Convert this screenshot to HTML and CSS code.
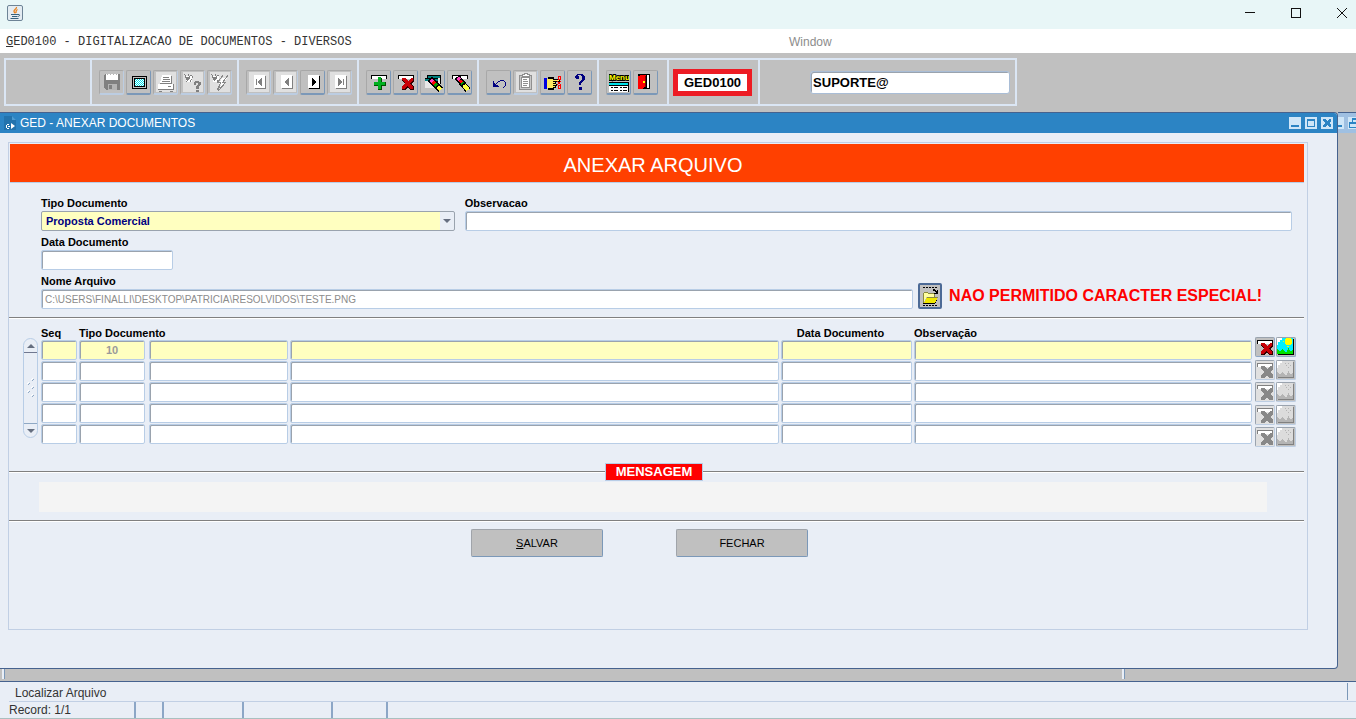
FILE: index.html
```
<!DOCTYPE html>
<html lang="pt-BR">
<head>
    <meta charset="utf-8">
    <title>GED0100 - Digitalizacao de Documentos</title>
    <link rel="stylesheet" href="styles.css">
</head>
<body>
    <!-- Icon set -->
    <svg class="icon-defs" aria-hidden="true">
        <symbol id="i-save" viewBox="0 0 20 20">
            <path fill="#808080" d="M2 3h1V2h15v16H4v-1H3v-1H2z"/>
            <path fill="#fff" d="M4 2h12v6H4z"/>
            <path fill="#b4b4b4" d="M5 2h1v1H5zM8 2h1v1H8zM11 2h1v1h-1zM14 2h1v1h-1zM6 12h9v6H6z"/>
            <path fill="#808080" d="M7 13h3v4H7z"/>
        </symbol>
        <symbol id="i-screen" viewBox="0 0 20 20">
            <path fill="#000" d="M3 4h15v13H3z"/>
            <path fill="#c0c0c0" d="M4 5h13v11H4z"/>
            <path fill="#000" d="M5 6h11v9H5z"/>
            <path fill="#fff" d="M6 7h9v7H6z"/>
            <path fill="none" stroke="#00e0e8" stroke-dasharray="1 1" d="M6 7.500h9M7 8.500h8M6 9.500h9M7 10.500h8M6 11.500h9M7 12.500h8M6 13.500h9"/>
        </symbol>
        <symbol id="i-print" viewBox="0 0 20 20">
            <path fill="#e0e0e0" d="M0 0h20v20H0z"/>
            <path fill="#fff" d="M6 3h9l1 8H4zM2 12h16v5H2z"/>
            <path fill="#808080" d="M7 5h6v1H7zM7 7h7v1H7zM6 9h8v1H6zM15 4h1v7h-1zM4 11h12v1H4zM12 14h3v1h-3zM2 17h16v1H2zM17 12h1v5h-1zM3 19h3v1H3zM14 19h3v1h-3z"/>
        </symbol>
        <symbol id="i-query" viewBox="0 0 20 20">
            <path fill="#e0e0e0" d="M0 0h20v20H0z"/>
            <path fill="#fff" d="M3 4h6v6H3z"/>
            <path fill="#808080" d="M1 2h1v1H1zM2 3h1v3H2zM3 5h3v3H3zM5 2h1v2H5zM6 4h1v3H6zM7 3h2v1H7zM9 4h1v2H9zM4 8h1v1H4zM7 8h1v2H7zM8 7h1v1H8zM3 9h1v1H3zM12 9h4v2h-4zM11 10h2v3h-2zM15 10h3v3h-3zM14 13h3v1h-3zM13 14h3v3h-3zM13 18h3v2h-3z"/>
        </symbol>
        <symbol id="i-run" viewBox="0 0 20 20">
            <path fill="#e0e0e0" d="M0 0h20v20H0z"/>
            <path fill="#fff" d="M3 4h6v6H3zM12 6h5l-3 4h2l-6 7 1-5H9z"/>
            <path fill="#808080" d="M1 2h1v1H1zM2 3h1v3H2zM3 5h3v3H3zM5 2h1v2H5zM6 4h1v3H6zM7 3h2v1H7zM4 8h1v1H4zM7 8h1v2H7z"/>
            <path fill="none" stroke="#888" d="M13 3L8 10h3l-4 8M18 3l-5 7h3l-8 9 2-7"/>
        </symbol>
        <symbol id="i-first" viewBox="0 0 20 20">
            <path fill="#e0e0e0" d="M0 0h20v20H0z"/>
            <path fill="#fff" d="M5 3h11v13H5z"/>
            <path fill="#808080" d="M16 4h1v13H6v-1h10zM7 7h1v6H7zM12 6h1v8h-1v-1h-1v-1h-1v-1H9V9h1V8h1V7h1z"/>
        </symbol>
        <symbol id="i-prev" viewBox="0 0 20 20">
            <path fill="#e0e0e0" d="M0 0h20v20H0z"/>
            <path fill="#fff" d="M5 3h11v13H5z"/>
            <path fill="#808080" d="M16 4h1v13H6v-1h10zM12 6h1v8h-1v-1h-1v-1h-1v-1H9V9h1V8h1V7h1z"/>
        </symbol>
        <symbol id="i-next" viewBox="0 0 20 20">
            <path fill="#fff" d="M5 3h11v13H5z"/>
            <path fill="#000" d="M16 4h1v13H6v-1h10zM9 6h1v1h1v1h1v1h1v2h-1v1h-1v1h-1v1H9z"/>
        </symbol>
        <symbol id="i-last" viewBox="0 0 20 20">
            <path fill="#e0e0e0" d="M0 0h20v20H0z"/>
            <path fill="#fff" d="M5 3h11v13H5z"/>
            <path fill="#808080" d="M16 4h1v13H6v-1h10zM13 7h1v6h-1zM8 6h1v1h1v1h1v1h1v2h-1v1h-1v1H9v1H8z"/>
        </symbol>
        <symbol id="i-insert" viewBox="0 0 20 20">
            <path fill="#000" d="M2 3h16v4H2z"/>
            <path fill="#fff" d="M3 4h14v3H3z"/>
            <path fill="#005000" d="M9 6h4v4h4v4h-4v4H9v-4H5v-4h4z"/>
            <path fill="#00b020" d="M9 5h3v5h4v3h-4v4H9v-4H5v-3h4z"/>
        </symbol>
        <symbol id="i-delete" viewBox="0 0 20 20">
            <path fill="#000" d="M2 3h16v4H2z"/>
            <path fill="#fff" d="M3 4h14v3H3z"/>
            <path fill="#300000" d="M6 6h4l2 3 3-3h3v3l-3 3 3 3v3h-4l-2-3-3 3H6v-3l3-3-3-3z"/>
            <path fill="#c80008" d="M6 6h3l3 3 3-3h2v2l-3 3 3 4v2h-3l-3-3-3 3H6v-2l3-4-3-3z"/>
        </symbol>
        <symbol id="i-delete-off" viewBox="0 0 20 20">
            <path fill="#e0e0e0" d="M1 1h18v18H1z"/>
            <path fill="#808080" d="M2 3h16v4H2z"/>
            <path fill="#fff" d="M3 4h14v3H3z"/>
            <path fill="#888" d="M6 6h4l2 3 3-3h3v3l-3 3 3 3v3h-4l-2-3-3 3H6v-3l3-3-3-3z"/>
        </symbol>
        <symbol id="i-clear" viewBox="0 0 20 20">
            <path fill="#000" d="M4 3h14v9H2V6h2z"/>
            <path fill="#008080" d="M5 4h12v2H5zM2 7h13v2H2z"/>
            <path fill="#e8e8e8" d="M2 9h12v7H2zM15 6h2v6h-2z"/>
            <path stroke="#000" stroke-width="6" d="M7 7l11 11"/>
            <path stroke="#ff40c0" stroke-width="4" d="M8 8l2 2"/>
            <path stroke="#f00" stroke-width="4" d="M10 10l2 2"/>
            <path stroke="#00a000" stroke-width="4" d="M12 12l2 2"/>
            <path stroke="#ffff40" stroke-width="4" d="M15 15l3 3"/>
        </symbol>
        <symbol id="i-erase" viewBox="0 0 20 20">
            <path fill="#000" d="M2 3h16v4H2z"/>
            <path fill="#fff" d="M3 4h14v3H3z"/>
            <path stroke="#000" stroke-width="6" d="M7 5l11 13"/>
            <path stroke="#ff40c0" stroke-width="3" d="M8 6l2 2"/>
            <path stroke="#f00" stroke-width="3" d="M10 8l2 3"/>
            <path stroke="#00a000" stroke-width="3" d="M12 11l1 1"/>
            <path stroke="#ffff40" stroke-width="4" d="M14 13l4 5"/>
        </symbol>
        <symbol id="i-undo" viewBox="0 0 20 20">
            <path fill="#000080" d="M4 9h1v2h1v1h1v1h2v1h1v1H4zM7 11h1v1H7zM8 10h1v1H8zM9 9h2v1H9zM11 8h4v1h-4zM15 9h1v1h-1zM16 10h1v4h-1zM15 14h1v1h-1zM14 15h1v1h-1z"/>
        </symbol>
        <symbol id="i-clip" viewBox="0 0 20 20">
            <path fill="#e0e0e0" d="M0 0h20v20H0z"/>
            <rect x="3.500" y="3.500" width="12" height="14" rx="1" fill="#c8c8c8" stroke="#909090"/>
            <path fill="#fff" stroke="#909090" d="M5.500 5.500h8v10h-8z"/>
            <path fill="#fff" stroke="#909090" d="M6.500 4.500v-2h2v-1h3v1h2v2z"/>
            <path fill="#909090" d="M7 7h4v1H7zM7 9h5v1H7zM7 11h5v1H7zM7 13h4v1H7z"/>
        </symbol>
        <symbol id="i-hand" viewBox="0 0 20 20">
            <path fill="#0000e0" d="M1 6h3v11H1z"/>
            <path fill="#000" d="M5 5h6v2h6v3h-4v2h1v2h-1v2h-2v2H5z"/>
            <path fill="#ffe860" d="M4 7h6v1h6v1h-6v1h2v1h-2v1h3v1h-3v1h2v1h-2v1H4z"/>
            <path fill="none" stroke="#f00" d="M15.500 4.500h2v3h-2zM15.500 13.500h2v3h-2zM14 9l4 4M14 13l4-4"/>
        </symbol>
        <symbol id="i-help" viewBox="0 0 20 20">
            <path fill="#000080" d="M7 2h6v1h1v1h1v4h-1v1h-1v1h-1v1h-1v2H9v-3h1V9h1V8h1V4h-1V3H8v1h1v3H6V6H5V4h1V3h1zM9 15h3v3H9z"/>
        </symbol>
        <symbol id="i-exit" viewBox="0 0 20 20">
            <path fill="#000" d="M2 2h12v15H2z"/>
            <path fill="#fff" d="M11 3h2v13h-2z"/>
            <path fill="#f00" d="M2 4l3-1h5v11l-4 3H2z"/>
            <path fill="#800000" d="M9 4h1v10l-1 1z"/>
            <path fill="#ff0" d="M7 9h2v2H7z"/>
        </symbol>
        <symbol id="i-folder" viewBox="0 0 20 20">
            <path stroke="#000" stroke-dasharray="2 1" d="M3 1.500h14M3 19.500h14"/>
            <path fill="#000" d="M13 3h2v1h1v1h1V4h1v4h-4V7h2V6h-1V5h-2zM3 17h12v1H3zM15 15h1v2h-1zM16 13h1v2h-1z"/>
            <path fill="#8a8a40" d="M3 7h1v10H3zM4 6h4v1H4zM8 7h6v1H8zM14 8h1v3h-1z"/>
            <path fill="#ffffa0" d="M4 7h4v1h6v3H6v2H5v2H4z"/>
            <path fill="#f0e800" d="M7 11h11v1h-1v2h-1v2h-1v1H4v-1h1v-2h1v-2h1z"/>
            <path fill="#8a8a40" d="M7 11h11v1H7z"/>
        </symbol>
        <symbol id="i-image" viewBox="0 0 20 20">
            <path fill="#000" d="M2 2h16v16H2z"/>
            <path fill="#00f0ff" d="M1 1h16v16H1z"/>
            <path fill="#fff" d="M1 1h5v2H4v2H2v3H1z"/>
            <path fill="#ffff00" d="M9 2h1V1h5v1h1v5h-1v1h-5V7H9zM7 4h1v1H7zM11 9h2v1h-2z"/>
            <path fill="#00e000" d="M1 12h1v1h1v1h2v-1h1v-1h1v1h1v1h1v1h2v-2h1v-2h1v2h1v1h2v-1h1v4H1z"/>
        </symbol>
        <symbol id="i-image-off" viewBox="0 0 20 20">
            <path fill="#808080" d="M2 2h16v16H2z"/>
            <path fill="#dcdcdc" d="M1 1h16v16H1z"/>
            <path fill="#fff" d="M1 1h5v2H4v2H2v3H1z"/>
            <path fill="#b4b4b4" d="M9 3h1v1H9zM12 3h1v1h-1zM10 5h1v1h-1zM14 5h1v1h-1zM12 7h1v1h-1zM1 12h1v1h1v1h2v-1h1v-1h1v1h1v1h1v1h2v-2h1v-2h1v2h1v1h2v-1h1v4H1z"/>
        </symbol>
    </svg>

    <div class="app">
        <header class="titlebar">
            <svg class="java" viewBox="0 0 16 16">
                <rect x=".5" y=".5" width="15" height="15" rx="1.500" fill="#e4ecf2" stroke="#6d8396"/>
                <path fill="none" stroke="#e8821e" stroke-width="1.300" d="M9.500 2C10 4 6.500 4.500 7 6.500c.2.800 1 1 .8 2M10.500 4.500C8.500 5.500 9 6.500 9 8"/>
                <path fill="none" stroke="#35617e" d="M4 9.500h7M5 11.500h5M3.500 13.500h8M11 9.500c2.500-.5 2 2-.5 2"/>
            </svg>
            <div class="win-controls">
                <button aria-label="Minimizar"><svg viewBox="0 0 12 12"><path d="M1 5.500h10"/></svg></button>
                <button aria-label="Maximizar"><svg viewBox="0 0 12 12"><rect x="1.500" y="1.500" width="9" height="9"/></svg></button>
                <button aria-label="Fechar janela"><svg viewBox="0 0 12 12"><path d="M1 1l10 10M11 1L1 11"/></svg></button>
            </div>
        </header>

        <nav class="menubar">
            <a class="menu-program" href="#"><u>G</u>ED0100 - DIGITALIZACAO DE DOCUMENTOS - DIVERSOS</a>
            <a class="menu-window" href="#">Window</a>
        </nav>

        <div class="toolbar">
            <div class="tool-strip">
                <div class="tool-blank"></div>
                <div class="tool-group">
                    <button class="tool" disabled aria-label="Salvar"><svg><use href="#i-save"/></svg></button>
                    <button class="tool" aria-label="Tela"><svg><use href="#i-screen"/></svg></button>
                    <button class="tool" disabled aria-label="Imprimir"><svg><use href="#i-print"/></svg></button>
                    <button class="tool" disabled aria-label="Consultar"><svg><use href="#i-query"/></svg></button>
                    <button class="tool" disabled aria-label="Executar consulta"><svg><use href="#i-run"/></svg></button>
                </div>
                <div class="tool-group">
                    <button class="tool" disabled aria-label="Primeiro"><svg><use href="#i-first"/></svg></button>
                    <button class="tool" disabled aria-label="Anterior"><svg><use href="#i-prev"/></svg></button>
                    <button class="tool" aria-label="Proximo"><svg><use href="#i-next"/></svg></button>
                    <button class="tool" disabled aria-label="Ultimo"><svg><use href="#i-last"/></svg></button>
                </div>
                <div class="tool-group">
                    <button class="tool" aria-label="Inserir registro"><svg><use href="#i-insert"/></svg></button>
                    <button class="tool" aria-label="Excluir registro"><svg><use href="#i-delete"/></svg></button>
                    <button class="tool" aria-label="Limpar tela"><svg><use href="#i-clear"/></svg></button>
                    <button class="tool" aria-label="Limpar registro"><svg><use href="#i-erase"/></svg></button>
                </div>
                <div class="tool-group">
                    <button class="tool" aria-label="Desfazer"><svg><use href="#i-undo"/></svg></button>
                    <button class="tool" disabled aria-label="Colar"><svg><use href="#i-clip"/></svg></button>
                    <button class="tool" aria-label="Lista de valores"><svg><use href="#i-hand"/></svg></button>
                    <button class="tool" aria-label="Ajuda"><svg><use href="#i-help"/></svg></button>
                </div>
                <div class="tool-group tool-group-exit">
                    <button class="tool" aria-label="Menu"><svg viewBox="0 0 20 20">
                        <text class="menu-glyph" x="0" y="8">Menu</text>
                        <path fill="#000" d="M0 10h20v10H0z"/>
                        <path fill="#00e0e8" d="M0 11h19v2H0z"/>
                        <path fill="#fff" d="M0 14h19v6H0z"/>
                        <path fill="#000" d="M2 15h2v1H2zM5 15h4v1H5zM11 15h2v1h-2zM14 15h4v1h-4zM2 18h2v1H2zM5 18h4v1H5zM11 18h2v1h-2zM14 18h4v1h-4z"/>
                    </svg></button>
                    <button class="tool" aria-label="Sair"><svg><use href="#i-exit"/></svg></button>
                </div>
                <div class="tool-code"><span class="code">GED0100</span></div>
                <div class="tool-user"><input class="user" aria-label="Usuario" value="SUPORTE@"></div>
            </div>
        </div>

        <div class="desktop">
            <section class="frame">
                <div class="frame-title">
                    <svg class="frame-icon" viewBox="0 0 12 14">
                        <path fill="#2373ad" d="M0 0h8l4 4v10H0z"/>
                        <path fill="#4d9bd2" d="M8 0l4 4H8z"/>
                        <path fill="#fff" d="M2 9h1v3H2zM3 8h2v1H3zM3 12h2v1H3zM4 10h2v1H4zM7 7l4 3-4 3z"/>
                    </svg>
                    <h1>GED - ANEXAR DOCUMENTOS</h1>
                    <div class="frame-controls">
                        <button aria-label="Minimizar formulario"><svg viewBox="0 0 12 12"><path d="M2 8h8v2H2z"/></svg></button>
                        <button aria-label="Maximizar formulario"><svg viewBox="0 0 12 12"><path d="M2 2h8v8H2zm1 2v5h6V4z" fill-rule="evenodd"/></svg></button>
                        <button aria-label="Fechar formulario"><svg viewBox="0 0 12 12"><path d="M2 2h2l2 2 2-2h2v2L8 6l2 2v2H8L6 8l-2 2H2V8l2-2-2-2z"/></svg></button>
                    </div>
                </div>

                <div class="panel">
                    <h2 class="banner">ANEXAR ARQUIVO</h2>

                    <form class="fields">
                        <div class="field">
                            <label for="tipo">Tipo Documento</label>
                            <div class="select-box">
                                <select id="tipo">
                                    <option>Proposta Comercial</option>
                                </select>
                            </div>
                        </div>
                        <div class="field">
                            <label for="obs">Observacao</label>
                            <input type="text" id="obs">
                        </div>
                        <div class="field field-date">
                            <label for="data">Data Documento</label>
                            <input type="text" id="data">
                        </div>
                        <div class="file-row">
                            <div class="field">
                                <label for="arquivo">Nome Arquivo</label>
                                <input type="text" id="arquivo" value="C:\USERS\FINALLI\DESKTOP\PATRICIA\RESOLVIDOS\TESTE.PNG" readonly>
                            </div>
                            <button type="button" class="browse" aria-label="Localizar Arquivo"><svg><use href="#i-folder"/></svg></button>
                            <strong class="warning">NAO PERMITIDO CARACTER ESPECIAL!</strong>
                        </div>
                    </form>

                    <div class="rule"></div>

                    <div class="records">
                        <div class="scroll">
                            <button aria-label="Subir"><svg viewBox="0 0 8 4"><path d="M4 0l4 4H0z"/></svg></button>
                            <svg class="grip" viewBox="0 0 8 20"><path stroke="#fff" d="M4 2l2-2M0 6l2-2M4 10l2-2M0 14l2-2M4 18l2-2"/><path stroke="#8fa8c4" d="M5 3l2-2M1 7l2-2M5 11l2-2M1 15l2-2M5 19l2-2"/></svg>
                            <button aria-label="Descer"><svg viewBox="0 0 8 4"><path d="M0 0h8L4 4z"/></svg></button>
                        </div>
                        <table>
                            <colgroup>
                                <col class="c-seq"><col class="c-tipo"><col class="c-cod"><col><col class="c-data"><col class="c-obs">
                            </colgroup>
                            <thead>
                                <tr>
                                    <th>Seq</th>
                                    <th colspan="3">Tipo Documento</th>
                                    <th class="center">Data Documento</th>
                                    <th>Observação</th>
                                </tr>
                            </thead>
                            <tbody>
                                <tr class="current">
                                    <td><input aria-label="Seq 1"></td>
                                    <td><input aria-label="Tipo 1" class="code-value" value="10"></td>
                                    <td><input aria-label="Codigo 1"></td>
                                    <td><input aria-label="Descricao 1"></td>
                                    <td><input aria-label="Data 1"></td>
                                    <td><input aria-label="Observação 1"></td>
                                </tr>
                                <tr>
                                    <td><input aria-label="Seq 2"></td>
                                    <td><input aria-label="Tipo 2"></td>
                                    <td><input aria-label="Codigo 2"></td>
                                    <td><input aria-label="Descricao 2"></td>
                                    <td><input aria-label="Data 2"></td>
                                    <td><input aria-label="Observação 2"></td>
                                </tr>
                                <tr>
                                    <td><input aria-label="Seq 3"></td>
                                    <td><input aria-label="Tipo 3"></td>
                                    <td><input aria-label="Codigo 3"></td>
                                    <td><input aria-label="Descricao 3"></td>
                                    <td><input aria-label="Data 3"></td>
                                    <td><input aria-label="Observação 3"></td>
                                </tr>
                                <tr>
                                    <td><input aria-label="Seq 4"></td>
                                    <td><input aria-label="Tipo 4"></td>
                                    <td><input aria-label="Codigo 4"></td>
                                    <td><input aria-label="Descricao 4"></td>
                                    <td><input aria-label="Data 4"></td>
                                    <td><input aria-label="Observação 4"></td>
                                </tr>
                                <tr>
                                    <td><input aria-label="Seq 5"></td>
                                    <td><input aria-label="Tipo 5"></td>
                                    <td><input aria-label="Codigo 5"></td>
                                    <td><input aria-label="Descricao 5"></td>
                                    <td><input aria-label="Data 5"></td>
                                    <td><input aria-label="Observação 5"></td>
                                </tr>
                            </tbody>
                        </table>
                        <div class="row-actions">
                            <button aria-label="Excluir 1"><svg><use href="#i-delete"/></svg></button>
                            <button aria-label="Ver imagem 1"><svg><use href="#i-image"/></svg></button>
                            <button disabled aria-label="Excluir 2"><svg><use href="#i-delete-off"/></svg></button>
                            <button disabled aria-label="Ver imagem 2"><svg><use href="#i-image-off"/></svg></button>
                            <button disabled aria-label="Excluir 3"><svg><use href="#i-delete-off"/></svg></button>
                            <button disabled aria-label="Ver imagem 3"><svg><use href="#i-image-off"/></svg></button>
                            <button disabled aria-label="Excluir 4"><svg><use href="#i-delete-off"/></svg></button>
                            <button disabled aria-label="Ver imagem 4"><svg><use href="#i-image-off"/></svg></button>
                            <button disabled aria-label="Excluir 5"><svg><use href="#i-delete-off"/></svg></button>
                            <button disabled aria-label="Ver imagem 5"><svg><use href="#i-image-off"/></svg></button>
                        </div>
                    </div>

                    <div class="message-head">
                        <div class="rule rule-left"></div>
                        <h3>MENSAGEM</h3>
                        <div class="rule"></div>
                    </div>
                    <div class="message-box"></div>
                    <div class="rule"></div>

                    <div class="actions">
                        <button class="btn"><u>S</u>ALVAR</button>
                        <button class="btn">FECHAR</button>
                    </div>
                </div>
            </section>

            <!-- edge of the window behind -->
            <div class="behind">
                <div class="behind-title">
                    <svg class="behind-icons" viewBox="0 0 18 12">
                        <path fill="#cfe6f8" d="M0 0h6v12H0zM10 0h8v12h-8z"/>
                        <path fill="#2c84c4" d="M0 8h4v2H0zM14 1h4v2h-3v2h-1zM11 5h7v2h-6v3h6v1h-7z"/>
                    </svg>
                </div>
            </div>
        </div>

        <div class="gutter">
            <span class="mark"></span>
            <span class="mark"></span>
        </div>

        <footer class="status">
            <div class="status-hint"><span>Localizar Arquivo</span></div>
            <div class="status-cells">
                <span class="cell cell-record">Record: 1/1</span>
                <span class="cell cell-s"></span>
                <span class="cell cell-m"></span>
                <span class="cell cell-l"></span>
                <span class="cell cell-n"></span>
            </div>
        </footer>
    </div>
</body>
</html>
```
FILE: styles.css
```
* { box-sizing: border-box; }
body { margin: 0; font-family: "Liberation Sans", Arial, sans-serif; font-size: 12px; color: #000; background: #c0c0c0; }
button { padding: 0; font-family: inherit; cursor: pointer; }
h1, h2, h3 { margin: 0; font-weight: normal; }
svg { display: block; }
.icon-defs { display: none; }
.app { display: flex; flex-direction: column; min-height: 100vh; }

/* main window */
.titlebar { display: flex; align-items: center; justify-content: space-between; height: 29px; padding: 0 8px 3px 7px; background: #e8f6f7; }
.java { width: 16px; height: 16px; }
.win-controls { display: flex; gap: 34px; }
.win-controls button { border: 0; background: none; }
.win-controls svg { width: 12px; height: 12px; fill: none; stroke: #111; }

.menubar { display: flex; align-items: center; height: 24px; padding: 1px 0 0 6px; background: #fff; }
.menubar a { text-decoration: none; }
.menu-program { flex: 0 0 58%; font-family: "Liberation Mono", "Courier New", monospace; font-size: 12px; color: #333; }
.menu-window { color: #8c8c8c; }

/* toolbar */
.toolbar { height: 59px; padding: 5px 4px; background: #c0c0c0; }
.tool-strip { display: inline-flex; height: 48px; border: 2px solid #dbe6f4; }
.tool-blank { width: 84px; }
.tool-group, .tool-code, .tool-user { display: flex; align-items: center; gap: 2px; padding: 0 5px 0 7px; border-left: 2px solid #dbe6f4; }
.tool-group-exit { padding-right: 9px; }
.tool { width: 25px; height: 25px; border: 1px solid #a8a8a8; border-right-color: #7b98b8; border-bottom: 2px solid #7b98b8; border-radius: 2px; background: #c0c0c0; }
.tool:disabled { border-right-color: #bccde2; border-bottom-color: #bccde2; }
.tool svg { width: 20px; height: 20px; margin: auto; shape-rendering: crispEdges; }
.menu-glyph { font-size: 8px; font-weight: bold; fill: #ff0; stroke: #000; stroke-width: 2px; paint-order: stroke; }
.tool-code { padding: 0 6px 0 4px; }
.code { border: 5px solid #ed1c24; padding: 0 6px; background: #fff; font-size: 13px; font-weight: bold; line-height: 17px; }
.tool-user { padding: 0 5px 0 50px; }
.user { width: 200px; height: 23px; border: 1px solid #a9bdd6; border-radius: 3px; padding: 0 2px; background: #fff; font: bold 13px "Liberation Sans", Arial, sans-serif; }

/* document window */
.desktop { display: flex; flex: 1; background: #c0c0c0; }
.frame { display: flex; flex: 1; flex-direction: column; border: 1px solid #46628e; border-left: 0; border-radius: 0 4px 4px 0; background: #e9eef6; }
.frame-title { display: flex; align-items: center; gap: 4px; height: 20px; padding: 0 4px; background: #2c84c4; border-top-right-radius: 3px; color: #fff; }
.frame-title h1 { flex: 1; font-size: 12px; }
.frame-icon { width: 12px; height: 14px; }
.frame-controls { display: flex; gap: 4px; }
.frame-controls button { width: 12px; height: 12px; border: 0; background: #cfe6f8; }
.frame-controls svg { width: 12px; height: 12px; fill: #2c84c4; shape-rendering: crispEdges; }
.behind { width: 18px; }
.behind-title { height: 21px; padding-top: 4px; border-top: 1px solid #46628e; background: #9fc0e2; }
.behind-icons { width: 18px; height: 12px; }

.panel { flex: 1; margin: 9px 29px 38px 8px; padding: 1px 3px 0 0; border: 1px solid #c1cfe4; }
.banner { height: 39px; margin-left: 1px; padding-right: 8px; border-bottom: 1px solid #b8cde6; background: #ff4000; color: #fff; font-size: 20px; line-height: 43px; text-align: center; }
.rule { height: 2px; border-top: 1px solid #808080; background: #fff; }

/* form */
input, select { border: 1px solid #b8cde6; border-radius: 2px; box-shadow: inset 1px 1px 0 #9aa3ae; background: #fff; font-family: "Liberation Sans", Arial, sans-serif; font-size: 11px; outline: none; }
.fields { display: grid; grid-template-columns: 1fr 2fr; gap: 4px 10px; padding: 13px 12px 8px 32px; }
.field label { display: block; font-size: 11px; font-weight: bold; line-height: 15px; }
.field input, .field select { display: block; width: 100%; height: 20px; padding: 0 3px; }
.field-date { grid-column: 1 / -1; width: 132px; }
.select-box { position: relative; }
.field select { appearance: none; border-color: #9aa3ae; box-shadow: none; background: linear-gradient(to left, #e9eef6 14px, #ffffc0 14px); color: #000080; font-weight: bold; padding: 0 4px; }
.select-box::after { content: ""; position: absolute; top: 8px; right: 4px; border: 4px solid transparent; border-top-color: #666f80; border-bottom: 0; pointer-events: none; }
.file-row { display: flex; grid-column: 1 / -1; align-items: flex-end; }
.file-row .field { flex: 1; }
.file-row input { color: #8c8c8c; font-size: 10px; }
.browse { width: 24px; height: 26px; margin: 0 7px 0 5px; border: 2px solid #4c6a96; border-radius: 2px; background: #c0c0c0; }
.browse svg { width: 20px; height: 20px; shape-rendering: crispEdges; }
.warning { padding-right: 30px; color: #f00; font-size: 16px; line-height: 27px; }

/* records */
.records { display: flex; align-items: flex-end; padding: 7px 8px 0 14px; }
.scroll { display: flex; flex-direction: column; justify-content: space-between; align-items: center; width: 15px; height: 100px; margin: 0 3px 9px 0; border: 1px solid #b8cde6; border-radius: 8px; }
.scroll button { width: 13px; height: 14px; border: 0; border-bottom: 1px solid #707890; background: none; }
.scroll button:last-child { border-bottom: 0; border-top: 1px solid #8fa8c4; }
.scroll button svg { width: 8px; height: 4px; margin: auto; fill: #666f80; }
.grip { width: 8px; height: 20px; }
table { flex: 1; table-layout: fixed; border-collapse: collapse; margin-bottom: 2px; }
.c-seq { width: 38px; }
.c-tipo { width: 70px; }
.c-cod { width: 141px; }
.c-data { width: 133px; }
.c-obs { width: 340px; }
th { height: 14px; padding: 0; font-size: 11px; line-height: 14px; text-align: left; }
th.center { padding-right: 14px; text-align: center; }
td { height: 21px; padding: 0 2px 1px 0; }
td:nth-child(2) { padding-right: 4px; }
td input { display: block; width: 100%; height: 20px; padding: 0 3px; }
.current input { background: #ffffc0; }
td .code-value { color: #9a9a9a; font-weight: bold; text-align: center; }
.row-actions { display: grid; grid-template-columns: 20px 20px; gap: 0 1px; align-content: space-between; height: 110px; margin-left: 1px; }
.row-actions button { height: 20px; border: 1px solid #9aa3ae; border-right-color: #8ca6c6; border-bottom-color: #8ca6c6; border-radius: 2px; background: #c0c0c0; }
.row-actions svg { width: 20px; height: 20px; margin: -1px; shape-rendering: crispEdges; }
.row-actions button:disabled { border-right-color: #bccde2; border-bottom-color: #bccde2; }

/* message */
.message-head { display: flex; align-items: center; margin-top: 16px; }
.message-head .rule { flex: 1; }
.message-head .rule-left { flex: 0 0 46%; }
.message-head h3 { padding: 0 10px; border: 1px solid #b8cde6; background: #f00; color: #fff; font-size: 13px; font-weight: bold; line-height: 16px; }
.message-box { height: 30px; margin: 1px 37px 8px 30px; background: #f4f4f4; }
.actions { display: flex; justify-content: center; gap: 73px; padding: 7px 34px 0 0; }
.btn { width: 132px; height: 28px; border: 1px solid #a0a4aa; border-right-color: #7b98b8; border-bottom-color: #7b98b8; border-radius: 2px; background: #c0c0c0; color: #000; font-size: 11px; }

/* bottom */
.gutter { display: flex; height: 12px; padding-left: 2px; background: #c0c0c0; }
.mark { width: 3px; height: 10px; border-left: 2px solid #e9eef6; border-right: 1px solid #7b98b8; }
.mark:first-child { margin-right: 82.5%; }
.status { border-top: 1px solid #46628e; border-bottom: 1px solid #a9c0c0; padding: 0 0 0 9px; background: #e9eef6; color: #333; }
.status-hint { display: flex; height: 20px; padding: 1px 8px 1px 6px; border-bottom: 1px solid #c1cfe4; line-height: 20px; }
.status-hint span { flex: 1; border-right: 1px solid #7b98b8; }
.status-cells { display: flex; height: 16px; line-height: 17px; }
.cell { border-right: 2px solid #8ca6c6; }
.cell-record { width: 127px; }
.cell-s { width: 28px; }
.cell-m { width: 80px; }
.cell-l { width: 89px; }
.cell-n { width: 55px; }
```
